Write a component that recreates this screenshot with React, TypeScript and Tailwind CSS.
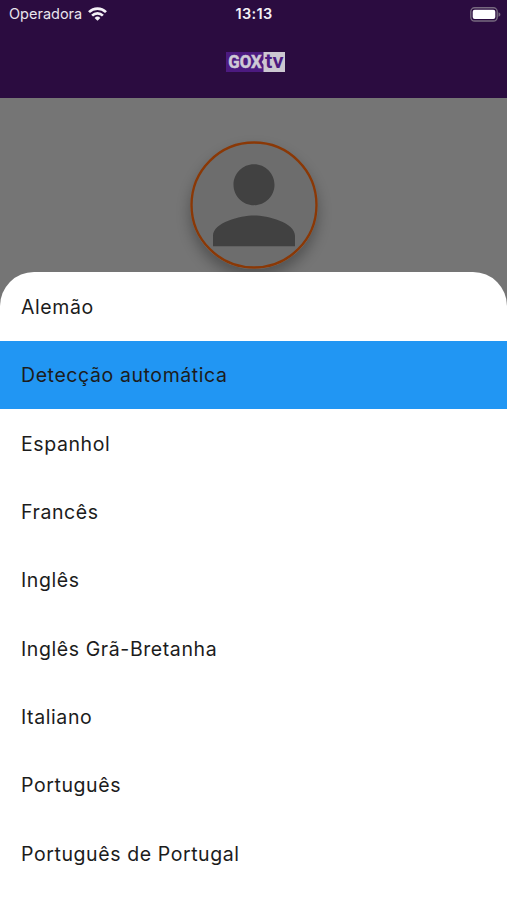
interface Language {
    id: string;
    label: string;
}

const languages: Language[] = [
    { id: 'de', label: 'Alemão' },
    { id: 'auto', label: 'Detecção automática' },
    { id: 'es', label: 'Espanhol' },
    { id: 'fr', label: 'Francês' },
    { id: 'en', label: 'Inglês' },
    { id: 'en-GB', label: 'Inglês Grã-Bretanha' },
    { id: 'it', label: 'Italiano' },
    { id: 'pt', label: 'Português' },
    { id: 'pt-PT', label: 'Português de Portugal' },
];

const WifiIcon = () => (
    <svg width="19" height="14" viewBox="0 0 19 14" fill="none" stroke="#f4f1f6" strokeWidth="2.7">
        <path d="M1 5.1a12.2 12.2 0 0 1 17 0" />
        <path d="M4.1 8.6a7.8 7.8 0 0 1 10.8 0" />
        <path d="M9.5 13.8 6.6 10.9a4.2 4.2 0 0 1 5.8 0z" fill="#f4f1f6" stroke="none" />
    </svg>
);

const BatteryIcon = () => (
    <svg width="31" height="15" viewBox="0 0 31 15">
        <rect x="0.8" y="0.8" width="26.4" height="13.2" rx="3.8" fill="none" stroke="#77697f" strokeWidth="1.4" />
        <rect x="2.7" y="2.7" width="22.6" height="9.4" rx="2" fill="#fff" />
        <path d="M28.5 5.2c1.3.5 1.9 1.3 1.9 2.3s-.6 1.8-1.9 2.3z" fill="#77697f" />
    </svg>
);

const StatusBar = () => (
    <div className="grid h-7 grid-cols-3 items-center text-[#e9e4ed]">
        <div className="flex items-center gap-[6px] pl-[9px]">
            <span className="text-[14.5px] leading-7">Operadora</span>
            <WifiIcon />
        </div>
        <span className="pl-px text-center text-[14.5px] leading-7 font-semibold tracking-[0.3px] text-[#f4f1f6]">13:13</span>
        <div className="flex justify-end pr-[6px]">
            <BatteryIcon />
        </div>
    </div>
);

const Logo = () => (
    <svg className="overflow-visible" width="60" height="24" viewBox="0 0 60 24" fontFamily="Roboto, 'Open Sans', sans-serif">
        <rect width="38" height="20" fill="#4c1a80" />
        <path d="M37.5 0H59v20H37.5v-7.2L35.6 10l1.9-2.8z" fill="#ccc8d1" />
        <text x="2.2" y="16" fontSize="17.5" fontWeight="700" fill="#cfcad6" stroke="#cfcad6" strokeWidth="0.5" textLength="33.5" lengthAdjust="spacingAndGlyphs">GOX</text>
        <text x="39" y="16.3" fontSize="20.5" fontWeight="600" fill="#4c1a80" textLength="18.5" lengthAdjust="spacingAndGlyphs">tv</text>
    </svg>
);

const Avatar = () => (
    <div className="size-[128px] rounded-full shadow-[0_8px_14px_rgba(0,0,0,0.3)]">
        <svg width="128" height="128" viewBox="0 0 128 128">
            <circle cx="64" cy="64" r="62.5" fill="#6d6d6d" stroke="#8a3806" strokeWidth="2.4" />
            <path
                transform="translate(2.5 2.7) scale(5.125)"
                fill="#414141"
                d="M12 12c2.21 0 4-1.79 4-4s-1.79-4-4-4-4 1.79-4 4 1.79 4 4 4zm0 2c-2.67 0-8 1.34-8 4v2h16v-2c0-2.66-5.33-4-8-4z"
            />
        </svg>
    </div>
);

const LanguageSheet: React.FC<{ selected: string }> = ({ selected }) => (
    <ul className="absolute inset-x-0 top-[272px] bottom-0 overflow-hidden rounded-t-[34px] bg-white pt-[0.4px]">
        {languages.map(({ id, label }) => (
            <li
                key={id}
                className={`flex h-[68.4px] items-center pt-[1.6px] pl-[21px] text-[19.5px] tracking-[0.59px] text-[#1c1c1c] ${
                    id === selected ? 'bg-[#2196f3]' : ''
                }`}
            >
                {label}
            </li>
        ))}
    </ul>
);

const App = () => (
    <div className="relative h-[900px] w-[507px] overflow-hidden bg-[#757575] font-[Inter,'Liberation_Sans',sans-serif]">
        <header className="h-[98px] bg-[#2b0c40]">
            <StatusBar />
            <div className="flex justify-center pt-6 pl-[5px]">
                <Logo />
            </div>
        </header>

        <main className="flex justify-center pt-[43px] pl-px">
            <Avatar />
        </main>

        <LanguageSheet selected="auto" />
    </div>
);

export default App;
